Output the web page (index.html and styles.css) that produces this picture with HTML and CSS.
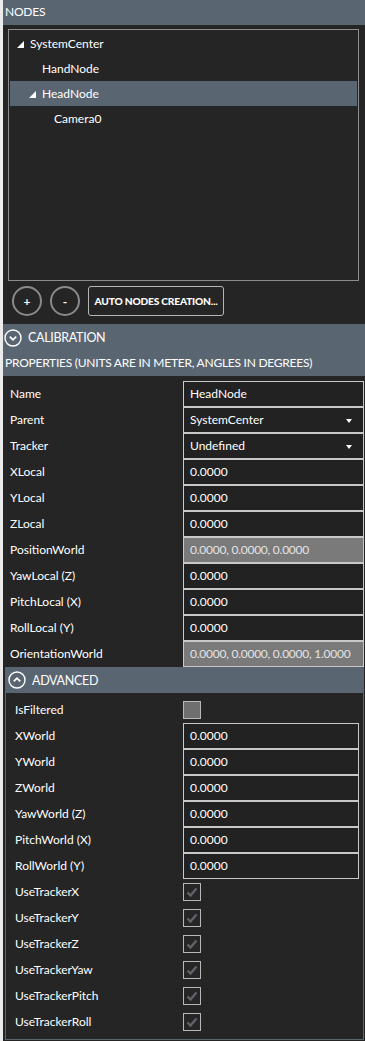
FILE: index.html
```html
<!DOCTYPE html>
<html>
<head>
<meta charset="utf-8">
<link rel="stylesheet" href="styles.css">
</head>
<body>
<div class="app">
  <div class="hdr">NODES</div>
  <div class="tree">
    <div class="node l0"><span class="tri"></span>SystemCenter</div>
    <div class="node l1 leaf">HandNode</div>
    <div class="node l1 sel"><span class="tri"></span>HeadNode</div>
    <div class="node l2 leaf">Camera0</div>
  </div>
  <div class="btns">
    <button class="circ">+</button>
    <button class="circ">-</button>
    <button class="auto">AUTO NODES CREATION...</button>
  </div>
  <div class="calib">
    <div class="exp"><svg class="ico" width="18" height="18" viewBox="0 0 18 18"><circle cx="9" cy="9" r="8" fill="none" stroke="#fff" stroke-width="1.4"/><path d="M5.8 7.6 L9 10.8 L12.2 7.6" fill="none" stroke="#fff" stroke-width="1.8"/></svg>CALIBRATION</div>
    <div class="props">PROPERTIES (UNITS ARE IN METER, ANGLES IN DEGREES)</div>
  </div>
  <div class="table">
    <div class="row"><span class="lbl">Name</span><span class="val">HeadNode</span></div>
    <div class="row"><span class="lbl">Parent</span><span class="val dd">SystemCenter</span></div>
    <div class="row"><span class="lbl">Tracker</span><span class="val dd">Undefined</span></div>
    <div class="row"><span class="lbl">XLocal</span><span class="val">0.0000</span></div>
    <div class="row"><span class="lbl">YLocal</span><span class="val">0.0000</span></div>
    <div class="row"><span class="lbl">ZLocal</span><span class="val">0.0000</span></div>
    <div class="row"><span class="lbl">PositionWorld</span><span class="val ro">0.0000, 0.0000, 0.0000</span></div>
    <div class="row"><span class="lbl">YawLocal (Z)</span><span class="val">0.0000</span></div>
    <div class="row"><span class="lbl">PitchLocal (X)</span><span class="val">0.0000</span></div>
    <div class="row"><span class="lbl">RollLocal (Y)</span><span class="val">0.0000</span></div>
    <div class="row"><span class="lbl">OrientationWorld</span><span class="val ro">0.0000, 0.0000, 0.0000, 1.0000</span></div>
  </div>
  <div class="adv">
    <div class="advhdr"><svg class="ico" width="18" height="18" viewBox="0 0 18 18"><circle cx="9" cy="9" r="8" fill="none" stroke="#fff" stroke-width="1.4"/><path d="M5.8 10.4 L9 7.2 L12.2 10.4" fill="none" stroke="#fff" stroke-width="1.8"/></svg>ADVANCED</div>
    <div class="advbody">
      <div class="row"><span class="lbl">IsFiltered</span><span class="cb off"></span></div>
      <div class="row"><span class="lbl">XWorld</span><span class="val">0.0000</span></div>
      <div class="row"><span class="lbl">YWorld</span><span class="val">0.0000</span></div>
      <div class="row"><span class="lbl">ZWorld</span><span class="val">0.0000</span></div>
      <div class="row"><span class="lbl">YawWorld (Z)</span><span class="val">0.0000</span></div>
      <div class="row"><span class="lbl">PitchWorld (X)</span><span class="val">0.0000</span></div>
      <div class="row"><span class="lbl">RollWorld (Y)</span><span class="val">0.0000</span></div>
      <div class="row"><span class="lbl">UseTrackerX</span><span class="cb"><svg width="16" height="16" viewBox="0 0 16 16"><path d="M3.5 8.5 L6.5 11.5 L12.5 4.5" fill="none" stroke="#5f636a" stroke-width="2.4"/></svg></span></div>
      <div class="row"><span class="lbl">UseTrackerY</span><span class="cb"><svg width="16" height="16" viewBox="0 0 16 16"><path d="M3.5 8.5 L6.5 11.5 L12.5 4.5" fill="none" stroke="#5f636a" stroke-width="2.4"/></svg></span></div>
      <div class="row"><span class="lbl">UseTrackerZ</span><span class="cb"><svg width="16" height="16" viewBox="0 0 16 16"><path d="M3.5 8.5 L6.5 11.5 L12.5 4.5" fill="none" stroke="#5f636a" stroke-width="2.4"/></svg></span></div>
      <div class="row"><span class="lbl">UseTrackerYaw</span><span class="cb"><svg width="16" height="16" viewBox="0 0 16 16"><path d="M3.5 8.5 L6.5 11.5 L12.5 4.5" fill="none" stroke="#5f636a" stroke-width="2.4"/></svg></span></div>
      <div class="row"><span class="lbl">UseTrackerPitch</span><span class="cb"><svg width="16" height="16" viewBox="0 0 16 16"><path d="M3.5 8.5 L6.5 11.5 L12.5 4.5" fill="none" stroke="#5f636a" stroke-width="2.4"/></svg></span></div>
      <div class="row"><span class="lbl">UseTrackerRoll</span><span class="cb"><svg width="16" height="16" viewBox="0 0 16 16"><path d="M3.5 8.5 L6.5 11.5 L12.5 4.5" fill="none" stroke="#5f636a" stroke-width="2.4"/></svg></span></div>
    </div>
  </div>
</div>
</body>
</html>
```
FILE: styles.css
```css
* { box-sizing: border-box; }
html, body { margin: 0; padding: 0; }
body {
  background: #252525;
  font-family: "Lato", "Open Sans", sans-serif;
  font-size: 12px;
  color: #fff;
  width: 365px;
  height: 1041px;
  overflow: hidden;
}
.app {
  border-left: 3px solid #ececec;
  min-height: 1041px;
  background: #252525;
}
.hdr {
  height: 25px;
  line-height: 23px;
  background: #5a6572;
  padding-left: 2px;
  letter-spacing: -0.2px;
}
.tree {
  margin: 4px 6px 0 5px;
  height: 252px;
  border: 1px solid #8c8c8c;
  padding: 1px 1px 0 1px;
}
.node {
  height: 25px;
  display: flex;
  align-items: center;
  white-space: nowrap;
}
.node.sel { background: #5a6572; }
.node.l0 { padding-left: 7px; }
.node.l1 { padding-left: 19px; }
.node.l2 { padding-left: 31px; }
.node.leaf.l1 { padding-left: 32px; }
.node.leaf.l2 { padding-left: 44px; }
.tri {
  width: 0; height: 0;
  border-left: 7px solid transparent;
  border-bottom: 7px solid #fff;
  margin-right: 6px;
  margin-top: 1px;
}
.btns {
  display: flex;
  align-items: center;
  gap: 8px;
  padding-left: 9px;
  margin-top: 5px;
  height: 30px;
}
.circ {
  width: 30px; height: 30px;
  border-radius: 50%;
  border: 2px solid #8a8a8a;
  background: transparent;
  color: #fff;
  font-family: inherit;
  font-size: 12px;
  font-weight: bold;
  padding: 0;
}
.auto {
  height: 30px;
  width: 136px;
  border: 1px solid #b5b5b5;
  border-radius: 3px;
  background: transparent;
  color: #fff;
  font-family: inherit;
  font-weight: 900;
  font-size: 10.2px;
  padding: 0;
  letter-spacing: -0.2px;
  white-space: nowrap;
}
.calib {
  margin-top: 8px;
  background: #5a6572;
}
.exp {
  height: 27px;
  display: flex;
  align-items: center;
  padding-left: 1px;
  font-size: 12.5px;
  letter-spacing: -0.3px;
}
.ico { margin-right: 6px; flex: none; }
.props {
  height: 25px;
  line-height: 23px;
  padding-left: 2px;
  white-space: nowrap;
  letter-spacing: -0.25px;
}
.table {
  padding-top: 5px;
  padding-right: 1px;
}
.row {
  height: 26px;
  display: flex;
  align-items: center;
}
.lbl {
  width: 180px;
  padding-left: 7px;
  padding-bottom: 2px;
  flex: none;
  white-space: nowrap;
}
.val {
  flex: 1;
  height: 26px;
  border: 1px solid #c8c8c8;
  background: #222;
  display: flex;
  align-items: center;
  padding-left: 6px;
  padding-bottom: 2px;
  position: relative;
  white-space: nowrap;
}
.val.ro { background: #7a7a7a; color: #e4e4e4; letter-spacing: -0.25px; }
.val.dd::after {
  content: "";
  position: absolute;
  right: 11px;
  top: 11px;
  border-left: 3.5px solid transparent;
  border-right: 3.5px solid transparent;
  border-top: 4px solid #fff;
}
.adv {
  margin: 0 1px 0 2px;
}
.advhdr {
  height: 26px;
  background: #5a6572;
  display: flex;
  align-items: center;
  padding-left: 3px;
  font-size: 12.5px;
  letter-spacing: -0.3px;
}
.advbody {
  border: 1px solid #5a6572;
  border-top: none;
  padding: 4px 4px 4px 0;
  height: 347px;
}
.advbody .lbl { width: 177px; padding-left: 9px; }
.cb {
  width: 18px; height: 18px;
  border: 1px solid #b8b8b8;
  background: #262626;
  display: flex;
  align-items: center;
  justify-content: center;
}
.cb.off { background: #6f6f6f; }
```
